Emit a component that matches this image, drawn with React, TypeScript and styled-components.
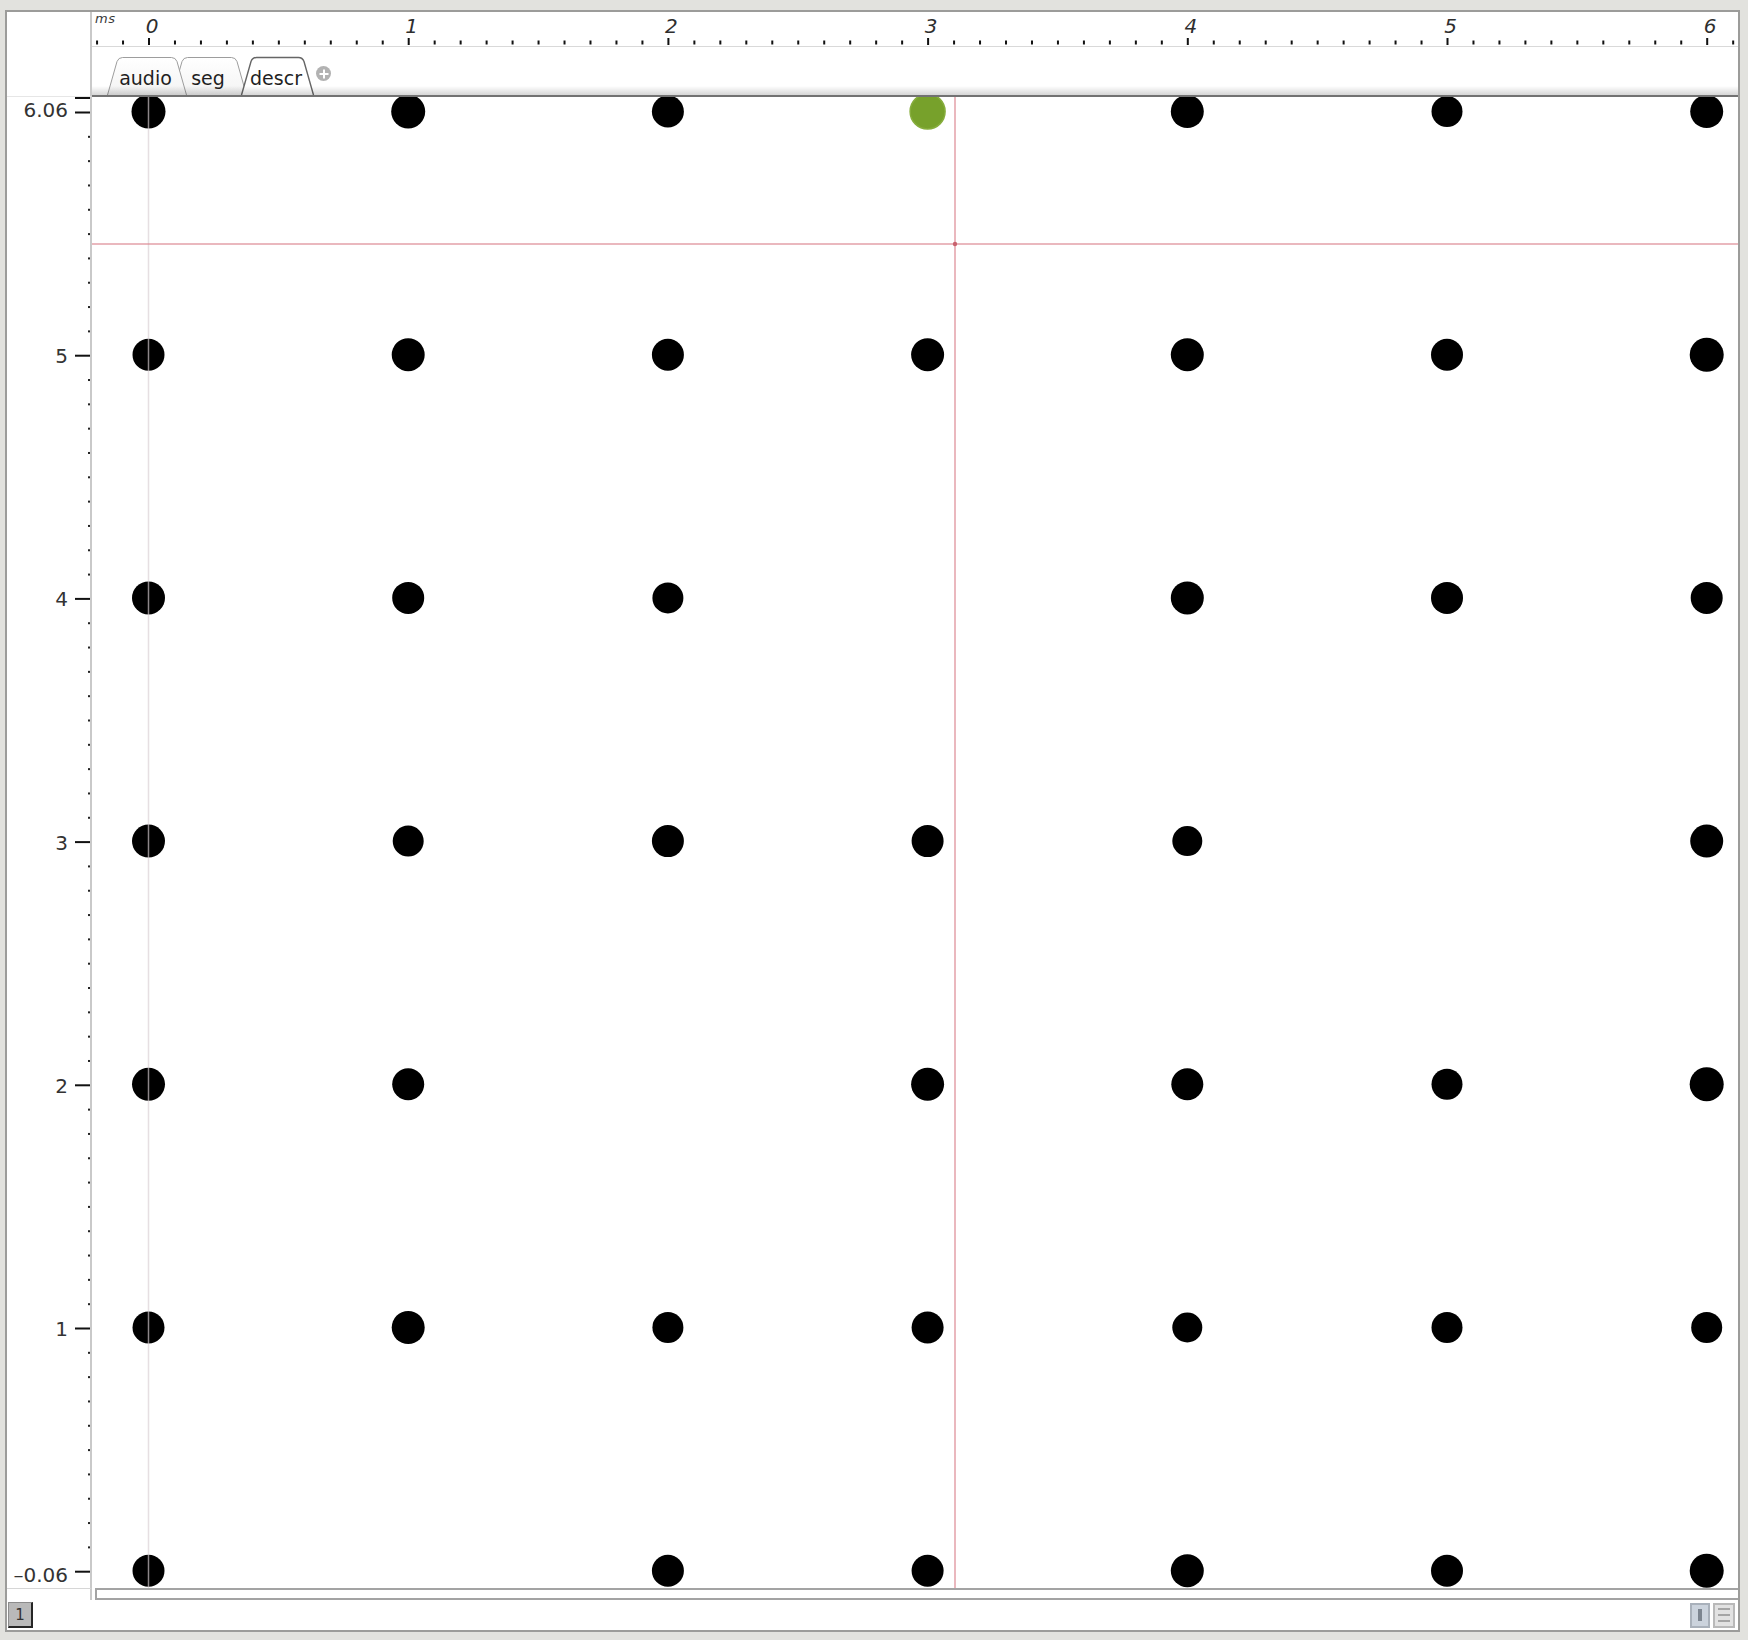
import React from "react";
import styled, { createGlobalStyle } from "styled-components";

/* ---------- geometry (px) ---------- */
const PLOT_W = 1646;
const PLOT_H = 1491;
const AXIS_W = 83;
const DOT_X0 = 56.5; // plot-local x of t = 0
const TICK_X0 = 57; // ruler-local x of t = 0
const PX_PER_MS = 259.7;
const Y_TOP = 14.5; // plot-local y of value 6
const PX_PER_UNIT = 243.2;

const dotX = (col: number) => DOT_X0 + PX_PER_MS * col;
const dotY = (v: number) => Y_TOP + PX_PER_UNIT * (6 - v);

/* sizes of dots, row by row from value 6 down to 0; 0 = no dot, negative = selected */
const DOTS: number[][] = [
  [34, 34, 32, -35, 33, 31, 33],
  [32, 33, 32, 33, 33, 32, 34],
  [33, 32, 31, 0, 33, 32, 32],
  [33, 31, 32, 32, 30, 0, 33],
  [33, 32, 0, 33, 32, 31, 34],
  [32, 33, 31, 32, 30, 31, 31],
  [32, 0, 32, 32, 33, 32, 34],
];

const GlobalStyle = createGlobalStyle`
  html, body { margin: 0; padding: 0; background: #e2e2de; }
  body { font-family: "DejaVu Sans", "Liberation Sans", sans-serif; }
  #root { display: block; }
`;

/* ---------- window frame ---------- */
const Frame = styled.div`
  margin: 10px 0 0 5px;
  width: max-content;
  display: grid;
  grid-template-columns: 85px ${PLOT_W}px;
  grid-template-rows: 35px 50px ${PLOT_H}px 12px 30px;
  border: 2px solid #9c9c9a;
  background: #ffffff;
`;

const Corner = styled.div`
  grid-column: 1;
  grid-row: 1 / span 2;
  box-sizing: border-box;
  border-right: 2px solid #c9c9c9;
  border-bottom: 1px solid #e6e6e6;
  background: #fff;
`;

const Ruler = styled.div`
  grid-column: 2;
  grid-row: 1;
  box-sizing: border-box;
  border-bottom: 1px solid #d9d9d9;
  overflow: hidden;
  svg { display: block; }
`;

const RulerLabel = styled.text`
  font-family: "DejaVu Sans", "Liberation Sans", sans-serif;
  font-style: italic;
  font-size: 20px;
  fill: #2e2e2e;
`;

const UnitLabel = styled.text`
  font-family: "DejaVu Sans", "Liberation Sans", sans-serif;
  font-style: italic;
  font-size: 13px;
  letter-spacing: 0.5px;
  fill: #3a3a3a;
`;

/* ---------- tabs ---------- */
const TabBar = styled.div`
  grid-column: 2;
  grid-row: 2;
  position: relative;
  box-sizing: border-box;
  display: flex;
  align-items: flex-end;
  padding-left: 15px;
  border-bottom: 2px solid #727272;
  background: #fff;

  &::after {
    content: "";
    position: absolute;
    left: 0;
    right: 0;
    bottom: 0;
    height: 9px;
    background: linear-gradient(rgba(0, 0, 0, 0), rgba(0, 0, 0, 0.16));
    pointer-events: none;
    z-index: 5;
  }
`;

const TabWrap = styled.div<{ $w: number; $overlap: number; $z: number }>`
  position: relative;
  box-sizing: border-box;
  width: ${(p) => p.$w}px;
  height: 38px;
  margin-left: ${(p) => -p.$overlap}px;
  z-index: ${(p) => p.$z};
  display: flex;
  align-items: flex-end;
  justify-content: center;
  padding: 0 3px 6px 0;

  svg {
    position: absolute;
    inset: 0;
    overflow: visible;
  }
`;

const TabText = styled.span`
  position: relative;
  font-family: "DejaVu Sans", "Liberation Sans", sans-serif;
  font-size: 19px;
  line-height: 22px;
  color: #1f1f1f;
`;

const AddTab = styled.div`
  align-self: flex-start;
  margin: 19px 0 0 2px;
  width: 15px;
  height: 15px;
  border-radius: 50%;
  background: #b2b2b2;
  position: relative;

  &::before,
  &::after {
    content: "";
    position: absolute;
    background: #fff;
    left: 50%;
    top: 50%;
    transform: translate(-50%, -50%);
  }
  &::before { width: 9px; height: 2px; }
  &::after { width: 2px; height: 9px; }
`;

function Tab({
  label,
  w,
  overlap,
  z,
  active,
}: {
  label: string;
  w: number;
  overlap: number;
  z: number;
  active?: boolean;
}) {
  const s = 10;
  const h = 38;
  const d = `M0.5,${h} L${s},4.5 Q${s + 1.5},0.5 ${s + 5.5},0.5 L${w - s - 5.5},0.5 Q${w - s - 1.5},0.5 ${w - s},4.5 L${w - 0.5},${h}`;
  const gid = `tabfill-${label}`;
  return (
    <TabWrap $w={w} $overlap={overlap} $z={z}>
      <svg width={w} height={h} viewBox={`0 0 ${w} ${h}`}>
        <defs>
          <linearGradient id={gid} x1="0" y1="0" x2="0" y2="1">
            <stop offset="0" stopColor="#ffffff" />
            <stop offset="1" stopColor={active ? "#ffffff" : "#f3f3f3"} />
          </linearGradient>
        </defs>
        <path
          d={d}
          fill={`url(#${gid})`}
          stroke={active ? "#666666" : "#9d9d9d"}
          strokeWidth={active ? 1.4 : 1}
        />
      </svg>
      <TabText>{label}</TabText>
    </TabWrap>
  );
}

/* ---------- vertical axis ---------- */
const Axis = styled.div`
  grid-column: 1;
  grid-row: 3;
  box-sizing: border-box;
  border-right: 2px solid #c9c9c9;
  overflow: hidden;
  svg { display: block; }
`;

const AxisLabel = styled.text`
  font-family: "DejaVu Sans", "Liberation Sans", sans-serif;
  font-size: 20px;
  fill: #333333;
`;

/* ---------- plot ---------- */
const Plot = styled.div`
  grid-column: 2;
  grid-row: 3;
  overflow: hidden;
  background: #fff;
  svg { display: block; }
`;

/* ---------- horizontal scroll strip ---------- */
const ScrollCorner = styled.div`
  grid-column: 1;
  grid-row: 4;
  box-sizing: border-box;
  border-right: 2px solid #c9c9c9;
  border-top: 1px solid #d6d6d6;
`;

const ScrollTrack = styled.div`
  grid-column: 2;
  grid-row: 4;
  box-sizing: border-box;
  margin-left: 3px;
  border: 2px solid #a3a3a3;
  border-right: none;
  background: #fff;
`;

/* ---------- status bar ---------- */
const StatusBar = styled.div`
  grid-column: 1 / span 2;
  grid-row: 5;
  display: flex;
  align-items: center;
  justify-content: space-between;
  padding: 0 3px 0 1px;
  background: #fff;
`;

const PageBox = styled.div`
  box-sizing: border-box;
  width: 25px;
  height: 26px;
  background: #b9b9b9;
  border-top: 1px solid #8c8c8c;
  border-left: 1px solid #8c8c8c;
  border-bottom: 2px solid #262626;
  border-right: 2px solid #262626;
  display: flex;
  align-items: center;
  justify-content: center;
  font-family: "DejaVu Sans", "Liberation Sans", sans-serif;
  font-size: 15px;
  color: #333;
`;

const ViewButtons = styled.div`
  display: flex;
  gap: 3px;
`;

const ViewButton = styled.div<{ $on?: boolean }>`
  box-sizing: border-box;
  width: ${(p) => (p.$on ? 20 : 22)}px;
  height: 25px;
  border: 2px solid ${(p) => (p.$on ? "#a9b1bb" : "#b9b9b9")};
  background: ${(p) => (p.$on ? "#cbd3dd" : "#e2e2e2")};
  display: flex;
  flex-direction: ${(p) => (p.$on ? "row" : "column")};
  align-items: center;
  justify-content: center;
  gap: 4px;
`;

const Bar = styled.span<{ $vertical?: boolean }>`
  display: block;
  background: ${(p) => (p.$vertical ? "#7c8590" : "#a5a5a5")};
  width: ${(p) => (p.$vertical ? 4 : 12)}px;
  height: ${(p) => (p.$vertical ? 12 : 2)}px;
`;

/* ---------- drawings ---------- */
function RulerSvg() {
  const ticks: React.ReactNode[] = [];
  for (let i = -2; i <= 62; i++) {
    const x = TICK_X0 + (PX_PER_MS / 10) * i;
    const major = i % 10 === 0;
    ticks.push(
      <rect
        key={i}
        x={x - 1}
        y={major ? 26 : 28.5}
        width={2}
        height={major ? 7 : 4}
        fill="#111"
      />
    );
  }
  const labels = [0, 1, 2, 3, 4, 5, 6].map((t) => (
    <RulerLabel key={t} x={TICK_X0 + PX_PER_MS * t + 3} y={21} textAnchor="middle">
      {t}
    </RulerLabel>
  ));
  return (
    <svg width={PLOT_W} height={34}>
      <UnitLabel x={3} y={11}>
        ms
      </UnitLabel>
      {labels}
      {ticks}
    </svg>
  );
}

function AxisSvg() {
  const items: React.ReactNode[] = [];
  const ty = (v: number) => dotY(v) + 1;
  for (let i = 0; i <= 60; i++) {
    if (i % 10 === 0) continue;
    items.push(<rect key={`m${i}`} x={81} y={ty(i / 10) - 1} width={2} height={2} fill="#222" />);
  }
  for (let v = 0; v <= 6; v++) {
    items.push(<rect key={`M${v}`} x={68} y={ty(v) - 1} width={15} height={2} fill="#111" />);
  }
  items.push(<rect key="top" x={68} y={0} width={15} height={2} fill="#111" />);
  const labels = [1, 2, 3, 4, 5].map((v) => (
    <AxisLabel key={v} x={61} y={ty(v) + 7.5} textAnchor="end">
      {v}
    </AxisLabel>
  ));
  return (
    <svg width={AXIS_W} height={PLOT_H}>
      {items}
      <AxisLabel x={61} y={20} textAnchor="end">
        6.06
      </AxisLabel>
      {labels}
      <AxisLabel x={61} y={1485} textAnchor="end">
        –0.06
      </AxisLabel>
    </svg>
  );
}

function PlotSvg() {
  const dots: React.ReactNode[] = [];
  DOTS.forEach((row, r) => {
    const v = 6 - r;
    row.forEach((size, c) => {
      if (size === 0) return;
      const selected = size < 0;
      const d = Math.abs(size);
      dots.push(
        <circle
          key={`${r}-${c}`}
          cx={dotX(c)}
          cy={dotY(v)}
          r={d / 2}
          fill={selected ? "#77a12b" : "#000"}
          stroke={selected ? "#86ad3c" : "none"}
          strokeWidth={selected ? 1.5 : 0}
        />
      );
    });
  });
  return (
    <svg width={PLOT_W} height={PLOT_H}>
      {dots}
      <line x1={DOT_X0} y1={0} x2={DOT_X0} y2={PLOT_H} stroke="#d8ced2" strokeOpacity={0.65} strokeWidth={1.5} />
      <line x1={863} y1={0} x2={863} y2={PLOT_H} stroke="#dc8a94" strokeOpacity={0.8} strokeWidth={1.5} />
      <line x1={0} y1={147} x2={PLOT_W} y2={147} stroke="#dc8a94" strokeOpacity={0.8} strokeWidth={1.5} />
      <circle cx={863} cy={147} r={2.2} fill="#c9626e" />
    </svg>
  );
}

export default function App() {
  return (
    <>
      <GlobalStyle />
      <Frame>
        <Corner />
        <Ruler>
          <RulerSvg />
        </Ruler>
        <TabBar>
          <Tab label="audio" w={80} overlap={0} z={2} />
          <Tab label="seg" w={75} overlap={15} z={1} />
          <Tab label="descr" w={73} overlap={6} z={3} active />
          <AddTab />
        </TabBar>
        <Axis>
          <AxisSvg />
        </Axis>
        <Plot>
          <PlotSvg />
        </Plot>
        <ScrollCorner />
        <ScrollTrack />
        <StatusBar>
          <PageBox>1</PageBox>
          <ViewButtons>
            <ViewButton $on>
              <Bar $vertical />
            </ViewButton>
            <ViewButton>
              <Bar />
              <Bar />
              <Bar />
            </ViewButton>
          </ViewButtons>
        </StatusBar>
      </Frame>
    </>
  );
}
